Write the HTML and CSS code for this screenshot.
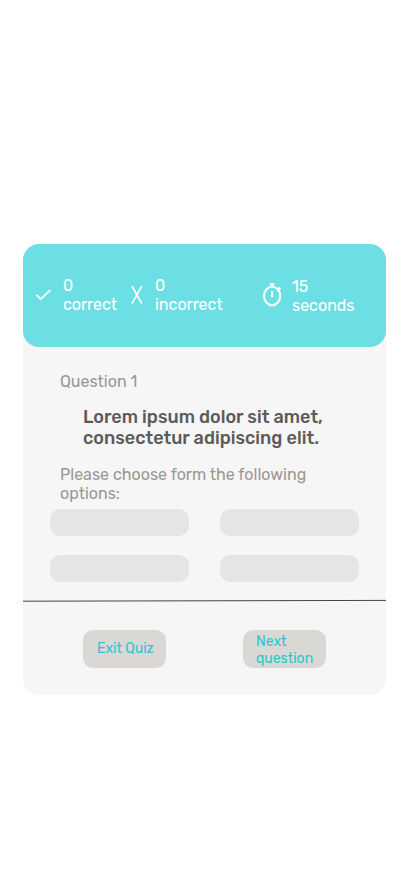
FILE: index.html
```html
<!DOCTYPE html>
<html lang="en">
<head>
<meta charset="utf-8">
<meta name="viewport" content="width=device-width, initial-scale=1">
<title>Quiz</title>
<link rel="stylesheet" href="styles.css">
</head>
<body>
<main class="card">
  <header class="stats">
    <div class="stat stat-correct">
      <svg class="icon-check" width="17" height="12" viewBox="0 0 17 12"><path d="M1.2 5.7 L5.7 10.1 L15.4 1.2"/></svg>
      <p>0<br>correct</p>
    </div>
    <div class="stat stat-incorrect">
      <svg class="icon-cross" width="12" height="20" viewBox="0 0 12 20"><path d="M1 1.2 L10.8 18.6 M10.8 1.2 L1 18.6"/></svg>
      <p>0<br>incorrect</p>
    </div>
    <div class="stat stat-time">
      <svg class="icon-timer" width="20" height="24" viewBox="0 0 20 24"><ellipse cx="9.1" cy="13" rx="8.1" ry="9.2"/><path d="M9.1 8V14.3 M6.8 1.2H11.4 M9.1 1V4 M14.7 6.6L16.7 4.8 M15.5 4.6L17.4 6.3"/></svg>
      <p>15<br>seconds</p>
    </div>
  </header>
  <section class="question">
    <p class="number">Question 1</p>
    <h1>Lorem ipsum dolor sit amet,<br>consectetur adipiscing elit.</h1>
    <p class="hint">Please choose form the following<br>options:</p>
    <div class="options">
      <div class="option"></div>
      <div class="option"></div>
      <div class="option"></div>
      <div class="option"></div>
    </div>
  </section>
  <svg class="divider" width="363" height="3" viewBox="0 0 363 3"><path d="M0 2.2L363 1.4"/></svg>
  <footer class="actions">
    <button class="exit">Exit Quiz</button>
    <button class="next">Next<br>question</button>
  </footer>
</main>
</body>
</html>
```

FILE: styles.css
```css
* { box-sizing: border-box; margin: 0; padding: 0; }
body {
  background: #fff;
  font-family: Rubik, Roboto, sans-serif;
  font-size: 16px;
  line-height: 19px;
}
.card {
  width: 363px;
  height: 451px;
  margin: 244px 0 0 23px;
  background: #f6f6f6;
  border-radius: 16px;
}
.stats {
  display: flex;
  height: 103px;
  padding: 32px 0 0 12px;
  background: #6cdfe4;
  border-radius: 16px;
  color: #fff;
}
.stat { display: flex; align-items: flex-start; white-space: nowrap; }
.stat svg { flex: none; fill: none; stroke: #fff; }
.stat-correct { width: 96px; }
.stat-incorrect { width: 132px; }
.stat-time { padding-top: 1px; }
.icon-check { margin: 13px 11px 0 0; stroke-width: 1.8; }
.icon-cross { margin: 9px 12px 0 0; stroke-width: 1.7; }
.stat .icon-timer { margin: 6px 9px 0 0; stroke-width: 2; }
.question { height: 253px; padding: 25px 27px 0; }
.number { padding-left: 10px; color: #9c9695; }
h1 {
  padding: 16px 0 0 33px;
  color: #5e5a5a;
  font-size: 18px;
  font-weight: 500;
  line-height: 21px;
  white-space: nowrap;
}
.hint { padding: 16px 0 0 10px; color: #9c9695; white-space: nowrap; }
.options {
  display: grid;
  grid-template-columns: 139px 139px;
  grid-auto-rows: 27.4px;
  gap: 18.8px 31px;
  padding-top: 5.7px;
}
.option { background: #e5e5e5; border-radius: 10px; }
.divider { display: block; margin-top: -1px; stroke: #444; stroke-width: 1; }
.actions { display: flex; gap: 77px; padding: 28px 0 0 60px; }
.actions button {
  width: 83px;
  height: 38px;
  padding: 2px 0 0 13px;
  border: 0;
  border-radius: 10px;
  background: #d9d8d4;
  color: #29c6d1;
  font: 14px/17px Rubik, Roboto, sans-serif;
  text-align: left;
  white-space: nowrap;
}
.actions .exit { padding: 0 0 2px 14px; }
```
